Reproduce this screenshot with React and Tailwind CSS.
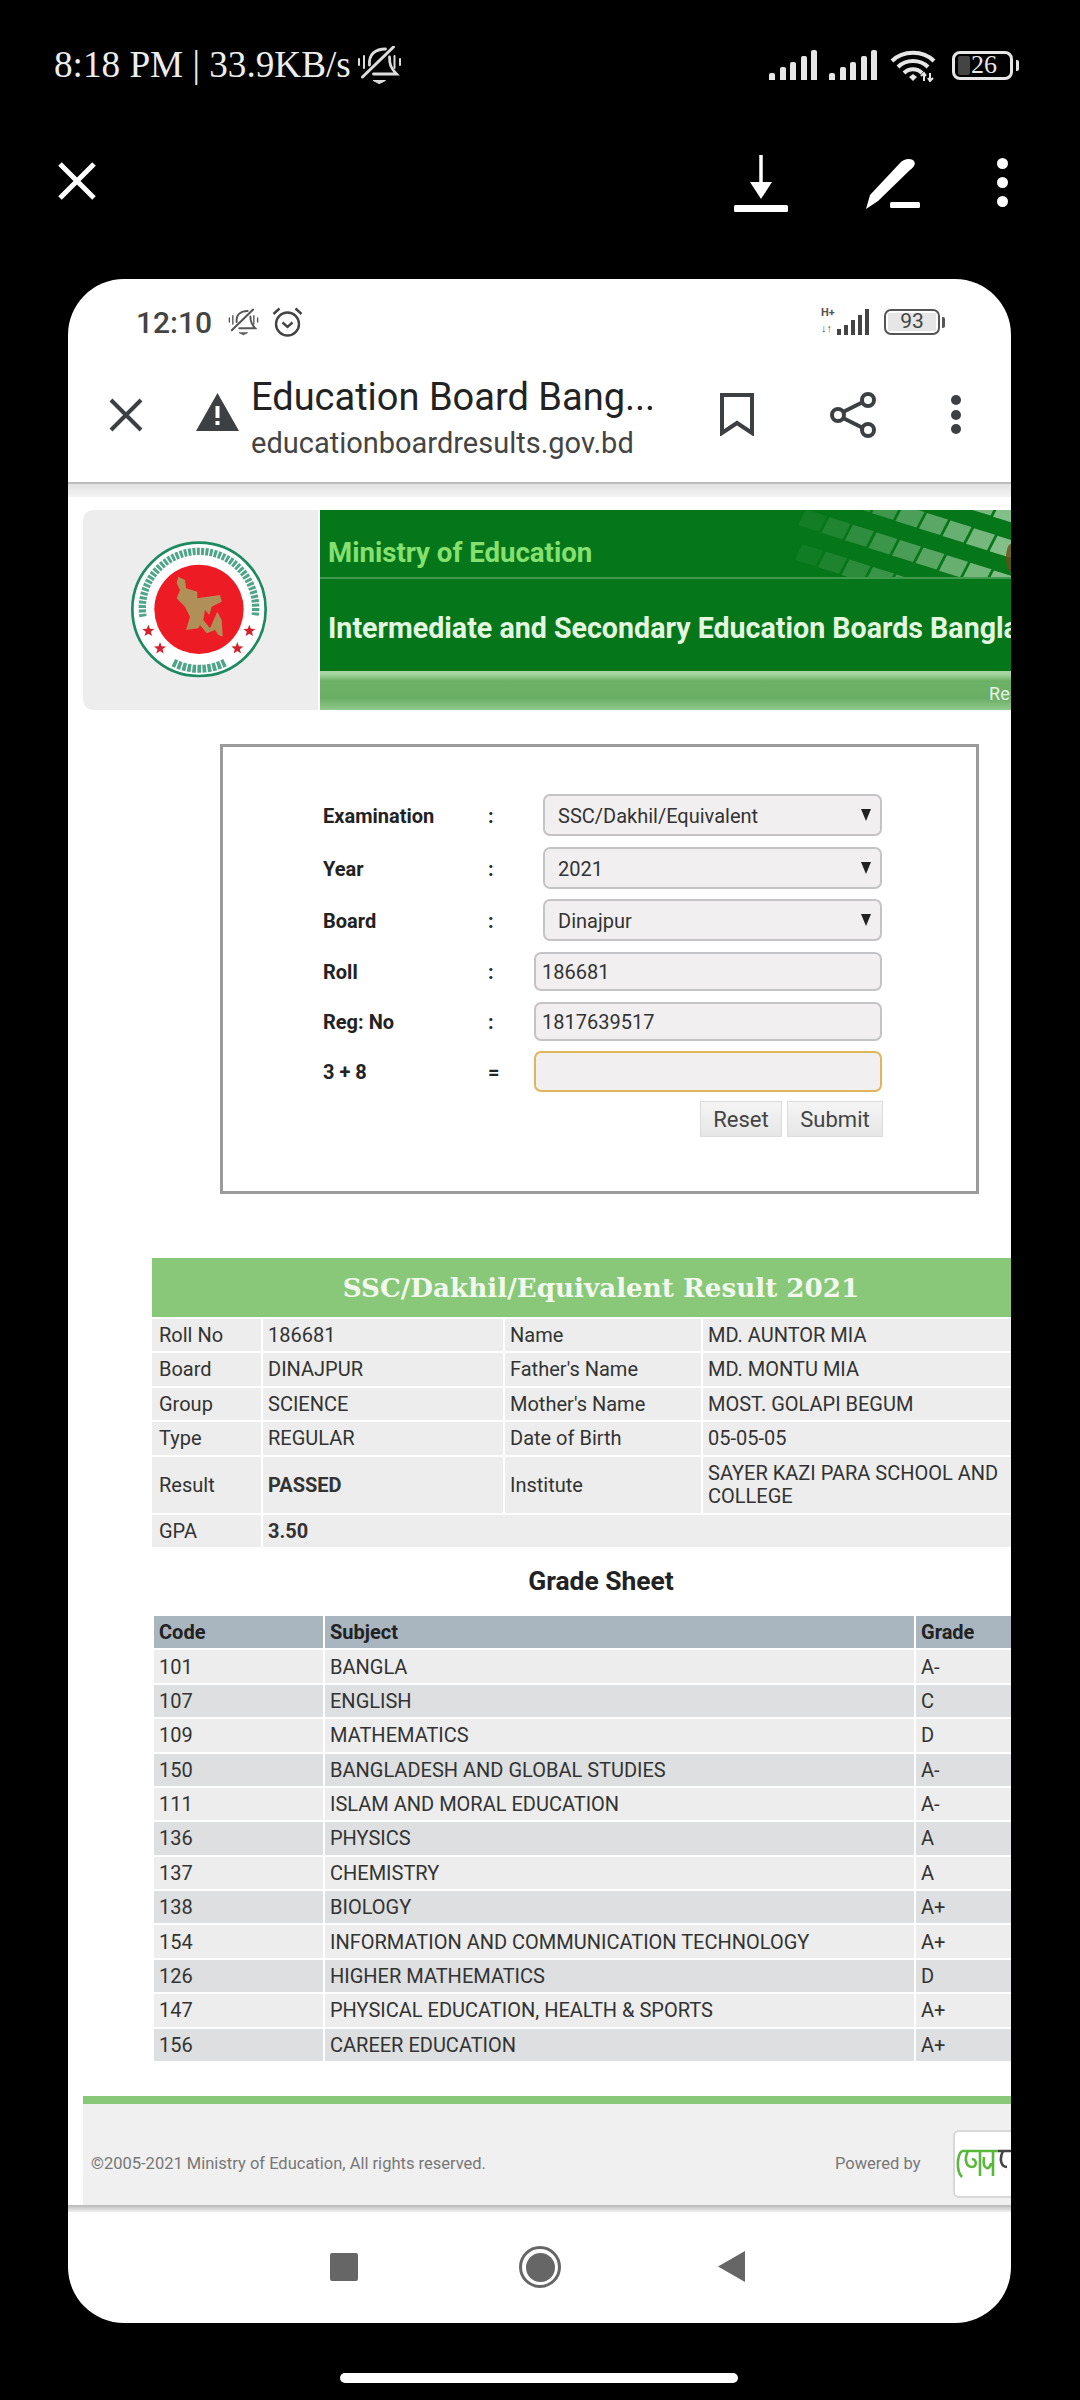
import React from 'react';

const signalBars = [7, 13, 18, 24, 30];

const info = [
  ['Roll No', '186681', 'Name', 'MD. AUNTOR MIA'],
  ['Board', 'DINAJPUR', "Father's Name", 'MD. MONTU MIA'],
  ['Group', 'SCIENCE', "Mother's Name", 'MOST. GOLAPI BEGUM'],
  ['Type', 'REGULAR', 'Date of Birth', '05-05-05'],
];

const grades = [
  ['101', 'BANGLA', 'A-'],
  ['107', 'ENGLISH', 'C'],
  ['109', 'MATHEMATICS', 'D'],
  ['150', 'BANGLADESH AND GLOBAL STUDIES', 'A-'],
  ['111', 'ISLAM AND MORAL EDUCATION', 'A-'],
  ['136', 'PHYSICS', 'A'],
  ['137', 'CHEMISTRY', 'A'],
  ['138', 'BIOLOGY', 'A+'],
  ['154', 'INFORMATION AND COMMUNICATION TECHNOLOGY', 'A+'],
  ['126', 'HIGHER MATHEMATICS', 'D'],
  ['147', 'PHYSICAL EDUCATION, HEALTH & SPORTS', 'A+'],
  ['156', 'CAREER EDUCATION', 'A+'],
];

function Signal() {
  return (
    <div className="flex items-end gap-[4.5px] h-[30px]">
      {signalBars.map(h => (
        <div key={h} className="w-[6px] rounded-t-[2px] bg-[#e6e6e6]" style={{ height: h }} />
      ))}
    </div>
  );
}

function Wifi() {
  return (
    <svg width="46" height="33" viewBox="0 0 46 33" fill="none" stroke="#e6e6e6" strokeWidth="4">
      <path d="M2 12 C13 1 33 1 44 12" />
      <path d="M8 18 C16 10 30 10 38 18" />
      <path d="M14 24 C19 19 27 19 32 24" />
      <path d="M19 28 L23 32 L27 28 L23 25 Z" fill="#e6e6e6" stroke="none" />
      <path d="M34 25 V32 M40 24 V32 M31 27 L34 24 L36 27 M38 29 L40 32 L43 29" strokeWidth="2" />
    </svg>
  );
}

function MutedBell({ color = '#dddddd', w = 45, h = 38 }) {
  return (
    <svg width={w} height={h} viewBox="7.5 8 45 38" fill="none" stroke={color} strokeWidth="2.8" strokeLinecap="round">
      <path d="M20 27 C19 16 26 11 36 11" />
      <path d="M40 19 C40 26 41 30 47 36 H24" />
      <path d="M13 39 L44 9" strokeWidth="3" />
      <path d="M24 42.5 H36 L30 45.5 Z" fill={color} strokeWidth="1" />
      <path d="M9.5 21 V27 M14.5 18 V30 M45 18 V30 M50.5 21 V27" strokeWidth="2" />
    </svg>
  );
}

function Alarm() {
  return (
    <svg width="31" height="30" viewBox="0 0 31 30" fill="none" stroke="#444444" strokeWidth="2.4">
      <circle cx="15.5" cy="17" r="11.5" />
      <path d="M10.5 15.5 L15.5 20 L20.5 15.5" />
      <path d="M1.5 7 L7.5 1.5 M29.5 7 L23.5 1.5" />
    </svg>
  );
}

function Star({ cx, cy, r }) {
  const pts = [];
  for (let i = 0; i < 10; i++) {
    const rad = i % 2 ? r * 0.42 : r;
    const a = -Math.PI / 2 + (i * Math.PI) / 5;
    pts.push(`${cx + rad * Math.cos(a)},${cy + rad * Math.sin(a)}`);
  }
  return <polygon points={pts.join(' ')} fill="#d5202e" />;
}

// government seal, drawn in the coordinates of a 3x crop
function Seal() {
  return (
    <svg width="200" height="170" viewBox="0 0 600 510" className="ml-[27px] mt-[10px]">
      <circle cx="267" cy="268" r="200" fill="#ffffff" stroke="#1d8a62" strokeWidth="8" />
      <circle cx="267" cy="268" r="134" fill="#ed1c24" />
      <path d="M99 290 A170 170 0 1 1 435 290" fill="none" stroke="#4fa587" strokeWidth="22" strokeDasharray="9 4" />
      <path d="M190 428 A172 172 0 0 0 345 428" fill="none" stroke="#4fa587" strokeWidth="24" strokeDasharray="11 4" />
      <path
        d="M205 170 L225 180 L228 205 L262 215 L262 235 L330 225 L335 245 L305 260 L298 285 L285 270 L280 300 L300 325 L322 275 L335 300 L338 350 L325 345 L315 330 L290 340 L270 315 L265 325 L228 330 L240 290 L225 260 L200 235 L210 210 L200 190 Z"
        fill="#b08f58"
      />
      <Star cx={115} cy={333} r={19} />
      <Star cx={150} cy={385} r={19} />
      <Star cx={382} cy={385} r={19} />
      <Star cx={418} cy={333} r={19} />
    </svg>
  );
}

// the tilted tiles in the header's corner
function HeaderPattern() {
  const tiles = [];
  for (let row = -2; row < 5; row++) {
    for (let col = -6; col < 10; col++) {
      const x = 246 + col * 23.5 - row * 27;
      const y = 3 + col * 7.6 + row * 27;
      if (x < 100 || x > 345 || y < -22 || y > 68) continue;
      tiles.push({ x, y, o: Math.max(0, Math.min(0.72, (x - 105) / 290)) });
    }
  }
  return (
    <svg width="330" height="68" viewBox="0 0 330 68" className="absolute top-0 right-0">
      {tiles.map((t, i) => (
        <polygon
          key={i}
          points={`${t.x},${t.y} ${t.x + 21},${t.y + 6.5} ${t.x + 13},${t.y + 22} ${t.x - 8},${t.y + 15.5}`}
          fill="#b4dcb4"
          opacity={t.o}
        />
      ))}
      <ellipse cx="330" cy="48" rx="5" ry="14" fill="#6b4d12" opacity="0.8" />
    </svg>
  );
}

function Select({ value }) {
  return (
    <div className="w-[339px] h-[42px] pl-[13px] pr-[9px] flex items-center justify-between bg-[#f2eff0] border-2 border-[#c4c4c6] rounded-[7px] text-[20px] text-[#333]">
      <span className="pt-[1px]">{value}</span>
      <svg width="10" height="12" viewBox="0 0 10 12"><path d="M0 0 H10 L5 12 Z" fill="#222" /></svg>
    </div>
  );
}

function Input({ value, focused }) {
  return (
    <div className={`w-[348px] pl-[6px] flex items-center bg-[#f2eff0] border-2 rounded-[7px] text-[20px] text-[#333] ${focused ? 'h-[41px] border-[#e0b65c]' : 'h-[39px] border-[#c4c4c6]'}`}>
      {value}
    </div>
  );
}

function FormRow({ label, sep = ':', className, children }) {
  return (
    <div className={`flex items-center pl-[100px] pr-[94px] ${className}`}>
      <span className="w-[165px] pt-[1px] text-[20px] font-bold text-[#222]">{label}</span>
      <span className="pt-[1px] text-[20px] font-bold text-[#222]">{sep}</span>
      <div className="ml-auto">{children}</div>
    </div>
  );
}

export default function App() {
  return (
    <div className="w-[1080px] h-[2400px] bg-black overflow-hidden font-['Roboto',sans-serif]">

      {/* phone status bar */}
      <div className="h-[130px] pl-[54px] pr-[61px] flex items-center justify-between">
        <div className="flex items-center gap-[6px] font-['Liberation_Serif',serif] text-[37.2px] text-[#ededed]">
          <span>8:18 PM | 33.9KB/s</span>
          <MutedBell />
        </div>
        <div className="flex items-center">
          <Signal />
          <div className="ml-[12px]"><Signal /></div>
          <div className="ml-[13px]"><Wifi /></div>
          <div className="ml-[16px] relative w-[61px] h-[29px] border-[3px] border-[#e6e6e6] rounded-[8px] flex items-center pl-[3px]">
            <div className="w-[12px] h-[19px] bg-[#444] rounded-[2px]" />
            <span className="ml-[1px] font-['Liberation_Serif',serif] text-[26px] leading-none text-[#e6e6e6]">26</span>
          </div>
          <div className="ml-[3px] w-[3px] h-[11px] bg-[#e6e6e6] rounded-r-[2px]" />
        </div>
      </div>

      {/* viewer toolbar */}
      <div className="h-[149px] flex items-start">
        <svg width="38" height="38" viewBox="0 0 38 38" className="ml-[58px] mt-[32px]">
          <path d="M2 2 L36 36 M36 2 L2 36" stroke="#fff" strokeWidth="5" />
        </svg>
        <svg width="54" height="58" viewBox="0 0 54 58" className="ml-[638px] mt-[25px]">
          <path d="M27 0 V28" stroke="#fff" strokeWidth="3.5" />
          <path d="M16 27 H38 L27 44 Z" fill="#fff" />
          <rect x="0" y="50" width="54" height="7" rx="1.5" fill="#fff" />
        </svg>
        <svg width="54" height="52" viewBox="0 0 54 52" className="ml-[78px] mt-[27px]">
          <path d="M0 52 L4 38 L34 6 C38 1 46 1 48 4 C50 7 48 10 44 13 L12 44 Z" fill="#fff" />
          <rect x="24" y="45" width="30" height="6" rx="1.5" fill="#fff" />
        </svg>
        <div className="ml-[77px] mt-[28px] flex flex-col gap-[8px]">
          <div className="w-[11px] h-[11px] rounded-full bg-white" />
          <div className="w-[11px] h-[11px] rounded-full bg-white" />
          <div className="w-[11px] h-[11px] rounded-full bg-white" />
        </div>
      </div>

      {/* shared screenshot */}
      <div className="ml-[68px] w-[943px] h-[2044px] rounded-[56px] bg-white overflow-hidden flex flex-col">

        {/* inner status bar */}
        <div className="h-[86px] shrink-0 pl-[68px] pr-[66px] flex items-center justify-between">
          <div className="flex items-center">
            <span className="w-[77px] text-[30px] font-medium text-[#444]">12:10</span>
            <div className="ml-[15px]"><MutedBell color="#555555" w={31} h={28} /></div>
            <div className="ml-[13px]"><Alarm /></div>
          </div>
          <div className="flex items-center">
            <div className="relative w-[48px] h-[26px]">
              <span className="absolute left-[0px] top-[-4px] text-[11px] font-bold text-[#555]">H+</span>
              <span className="absolute left-[0px] top-[12px] text-[11px] font-bold text-[#555]">↓↑</span>
              <div className="absolute right-0 bottom-0 flex items-end gap-[3px]">
                {[6, 10, 15, 20, 26].map(h => (
                  <div key={h} className="w-[4px] bg-[#444]" style={{ height: h }} />
                ))}
              </div>
            </div>
            <div className="ml-[15px] w-[56px] h-[26px] border-[2.5px] border-[#555] rounded-[7px] flex items-center justify-center p-[2px]">
              <span className="w-full h-full bg-[#e6e6e6] flex items-center justify-center text-[21px] text-[#444]">93</span>
            </div>
            <div className="ml-[2px] w-[3px] h-[11px] bg-[#555] rounded-r-[2px]" />
          </div>
        </div>

        {/* browser toolbar */}
        <div className="h-[119px] shrink-0 flex items-start border-b-2 border-[#bdbdbd]">
          <svg width="34" height="34" viewBox="0 0 34 34" className="ml-[41px] mt-[33px]">
            <path d="M2 2 L32 32 M32 2 L2 32" stroke="#3c4043" strokeWidth="4" />
          </svg>
          <svg width="43" height="38" viewBox="0 0 43 38" className="ml-[53px] mt-[28px]">
            <path d="M21.5 0 L43 38 H0 Z" fill="#3c4043" />
            <rect x="19.5" y="13" width="4" height="12" fill="#fff" />
            <rect x="19.5" y="28" width="4" height="4" fill="#fff" />
          </svg>
          <div className="ml-[12px] mt-[9px] w-[420px]">
            <div className="text-[38px] leading-[46px] text-[#222]">Education Board Bang...</div>
            <div className="text-[29px] leading-[46px] text-[#444]">educationboardresults.gov.bd</div>
          </div>
          <svg width="34" height="43" viewBox="0 0 34 43" fill="none" className="ml-[49px] mt-[28px]">
            <path d="M2 2 H32 V40 L17 30 L2 40 Z" stroke="#3c4043" strokeWidth="4" />
          </svg>
          <svg width="46" height="46" viewBox="0 0 46 46" fill="none" stroke="#3c4043" strokeWidth="4" className="ml-[76px] mt-[27px]">
            <circle cx="8" cy="23" r="6" />
            <circle cx="38" cy="8" r="6" />
            <circle cx="38" cy="38" r="6" />
            <path d="M13 20 L33 10 M13 26 L33 36" />
          </svg>
          <div className="ml-[75px] mt-[30px] flex flex-col gap-[4.5px]">
            <div className="w-[10px] h-[10px] rounded-full bg-[#3c4043]" />
            <div className="w-[10px] h-[10px] rounded-full bg-[#3c4043]" />
            <div className="w-[10px] h-[10px] rounded-full bg-[#3c4043]" />
          </div>
        </div>
        <div className="h-[13px] shrink-0 bg-gradient-to-b from-[#e2e2e2] to-[#f3f3f3]" />

        {/* web page */}
        <div className="h-[1708px] shrink-0 overflow-hidden flex flex-col">

          {/* site header */}
          <div className="ml-[15px] mt-[13px] h-[200px] shrink-0 flex">
            <div className="w-[235px] shrink-0 bg-[#ededed] rounded-l-[10px] mr-[2px]">
              <Seal />
            </div>
            <div className="flex-1 min-w-0 overflow-hidden flex flex-col">
              <div className="relative h-[161px] shrink-0 bg-[#06761a] whitespace-nowrap">
                <HeaderPattern />
                <div className="relative h-[69px] pl-[8px] pt-[18px] flex items-center border-b-2 border-[#3f9a4c] text-[27.6px] font-bold text-[#86e070]">Ministry of Education</div>
                <div className="relative h-[90px] pl-[8px] pt-[8px] flex items-center text-[28.6px] font-bold text-[#e4f8e0]">Intermediate and Secondary Education Boards Bangladesh</div>
              </div>
              <div className="h-[39px] shrink-0 bg-[linear-gradient(#a8d6a2_0%,#a8d6a2_8%,#6cb266_25%,#6aae64_70%,#93c98e_100%)] flex items-center justify-end overflow-hidden">
                <span className="mr-[-8px] pt-[5px] text-[18px] text-[#e8f3e6]">Res</span>
              </div>
            </div>
          </div>

          {/* search form */}
          <div className="ml-[152px] mt-[34px] w-[759px] h-[450px] shrink-0 border-[3px] border-[#9b9b9b] pt-[47px] flex flex-col">
            <FormRow label="Examination"><Select value="SSC/Dakhil/Equivalent" /></FormRow>
            <FormRow label="Year" className="mt-[11px]"><Select value="2021" /></FormRow>
            <FormRow label="Board" className="mt-[10px]"><Select value="Dinajpur" /></FormRow>
            <FormRow label="Roll" className="mt-[11px]"><Input value="186681" /></FormRow>
            <FormRow label="Reg: No" className="mt-[11px]"><Input value="1817639517" /></FormRow>
            <FormRow label="3 + 8" sep="=" className="mt-[10px]"><Input focused /></FormRow>
            <div className="mt-[9px] pr-[93px] flex justify-end gap-[5px]">
              <div className="w-[82px] h-[36px] flex items-center justify-center bg-gradient-to-b from-[#f5f5f5] to-[#e6e6e6] border border-[#dcdcdc] text-[22px] text-[#444]">Reset</div>
              <div className="w-[96px] h-[36px] flex items-center justify-center bg-gradient-to-b from-[#f5f5f5] to-[#e6e6e6] border border-[#dcdcdc] text-[22px] text-[#444]">Submit</div>
            </div>
          </div>

          {/* result */}
          <div className="ml-[84px] mt-[64px] w-[898px] shrink-0">
            <div className="h-[59px] flex items-center justify-center bg-[#88c878] font-['DejaVu_Serif',serif] font-bold text-[26.2px] text-[#f2f8ee]">
              SSC/Dakhil/Equivalent Result 2021
            </div>
            <div className="mt-[2px] grid grid-cols-[109px_240px_196px_1fr] grid-rows-[32px_33px_32px_33px_56px_32px] gap-[2px] text-[20px] leading-[23px] text-[#333]">
              {info.map(row => (
                <React.Fragment key={row[0]}>
                  <div className="pl-[7px] flex items-center bg-[#ededed]">{row[0]}</div>
                  <div className="pl-[5px] flex items-center bg-[#ededed]">{row[1]}</div>
                  <div className="pl-[5px] flex items-center bg-[#ededed]">{row[2]}</div>
                  <div className="pl-[5px] flex items-center bg-[#ededed]">{row[3]}</div>
                </React.Fragment>
              ))}
              <div className="pl-[7px] flex items-center bg-[#ededed]">Result</div>
              <div className="pl-[5px] flex items-center bg-[#ededed] font-bold">PASSED</div>
              <div className="pl-[5px] flex items-center bg-[#ededed]">Institute</div>
              <div className="pl-[5px] flex items-center bg-[#ededed]"><span className="w-[296px]">SAYER KAZI PARA SCHOOL AND COLLEGE</span></div>
              <div className="pl-[7px] flex items-center bg-[#ededed]">GPA</div>
              <div className="col-span-3 pl-[5px] flex items-center bg-[#ededed] font-bold">3.50</div>
            </div>
            <div className="h-[69px] flex items-center justify-center text-[26.4px] font-bold text-[#222]">Grade Sheet</div>
          </div>

          {/* grade sheet */}
          <div className="ml-[86px] w-[857px] shrink-0 grid grid-cols-[169px_589px_1fr] auto-rows-[32.38px] gap-[2px] text-[20px] text-[#333]">
            <div className="pl-[5px] flex items-center bg-[#a9b5bf] font-bold text-[#222]">Code</div>
            <div className="pl-[5px] flex items-center bg-[#a9b5bf] font-bold text-[#222]">Subject</div>
            <div className="pl-[5px] flex items-center bg-[#a9b5bf] font-bold text-[#222]">Grade</div>
            {grades.map((g, i) => {
              const bg = i % 2 ? 'bg-[#dddfe1]' : 'bg-[#ededed]';
              return (
                <React.Fragment key={g[0]}>
                  <div className={`pl-[5px] flex items-center ${bg}`}>{g[0]}</div>
                  <div className={`pl-[5px] flex items-center ${bg}`}>{g[1]}</div>
                  <div className={`pl-[5px] flex items-center ${bg}`}>{g[2]}</div>
                </React.Fragment>
              );
            })}
          </div>

          {/* site footer */}
          <div className="ml-[15px] mt-[35px] h-[8px] shrink-0 bg-[#88c878]" />
          <div className="ml-[15px] flex-1 bg-[#f0f0f0] flex items-center pl-[8px] pt-[19px] text-[16.5px] text-[#777] whitespace-nowrap">
            <span className="w-[744px] shrink-0">©2005-2021 Ministry of Education, All rights reserved.</span>
            <span className="w-[118px] shrink-0">Powered by</span>
            <div className="w-[70px] h-[68px] shrink-0 bg-white border-2 border-[#d8d8d8] rounded-[6px] flex items-center pl-[1px]">
              <svg width="62" height="32" viewBox="0 0 62 32" fill="none" stroke="#58b83a" strokeWidth="2.6">
                <path d="M6 3 C1 7 0 23 6 29 M6 3 H42 M12 3 C8 11 10 19 16 19 C21 19 21 11 16 11 M24 3 V28 M28 9 C26 22 34 23 35 15 M37 3 V28" />
                <path d="M42 3 H62 M47 3 C43 11 45 19 51 19 M57 3 V28" stroke="#444" />
              </svg>
            </div>
          </div>
        </div>

        <div className="h-[7px] shrink-0 bg-gradient-to-b from-[#b8b8b8] to-[#f0f0f0]" />

        {/* android nav */}
        <div className="h-[111px] shrink-0 flex items-start pt-[40px] pl-[262px]">
          <div className="w-[28px] h-[28px] mt-[1px] rounded-[2px] bg-[#666]" />
          <div className="ml-[161px] mt-[-6px] w-[42px] h-[42px] rounded-full border-[3px] border-[#666] flex items-center justify-center">
            <div className="w-[29px] h-[29px] rounded-full bg-[#666]" />
          </div>
          <svg width="27" height="31" viewBox="0 0 27 31" className="ml-[157px] mt-[-1px]">
            <path d="M27 0 V31 L0 15.5 Z" fill="#666" />
          </svg>
        </div>
      </div>

      <div className="mt-[50px] ml-[340px] w-[398px] h-[10px] rounded-full bg-white" />
    </div>
  );
}
